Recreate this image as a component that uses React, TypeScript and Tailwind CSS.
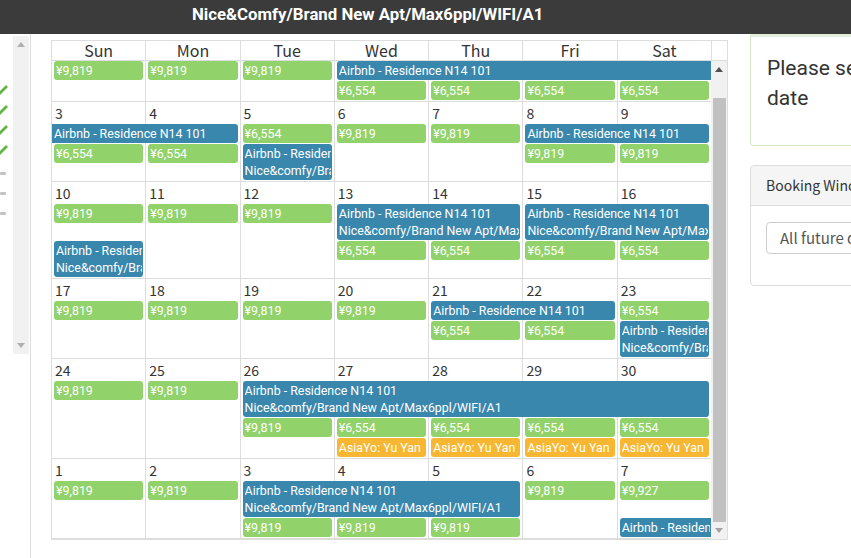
import React from 'react';

const P1 = 'Airbnb - Residence N14 101';
const P2 = 'Nice&comfy/Brand New Apt/Max6ppl/WIFI/A1';

type Kind = 'g' | 'b' | 'o';
type Ev = { c: number; s?: number; l: number; k: Kind; t: string[]; cl?: boolean; cr?: boolean };
type Week = { dates?: string[]; cls: string; ev: Ev[] };

const COL_START = ['col-start-1', 'col-start-2', 'col-start-3', 'col-start-4', 'col-start-5', 'col-start-6', 'col-start-7'];
const COL_SPAN = ['col-span-1', 'col-span-2', 'col-span-3', 'col-span-4', 'col-span-5', 'col-span-6', 'col-span-7'];
const ROW_START = ['row-start-1', 'row-start-2', 'row-start-3', 'row-start-4', 'row-start-5'];
const COLORS: Record<Kind, string> = { g: 'bg-[#91d26a]', b: 'bg-[#3a87ad]', o: 'bg-[#f8b732]' };

const g = (c: number, l: number, t: string): Ev => ({ c, l, k: 'g', t: [t] });
const o = (c: number, l: number): Ev => ({ c, l, k: 'o', t: ['AsiaYo: Yu Yan'] });

const weeks: Week[] = [
  {
    cls: 'h-[41px] grid-rows-[auto_auto_1fr]',
    ev: [
      g(0, 0, '¥9,819'), g(1, 0, '¥9,819'), g(2, 0, '¥9,819'),
      { c: 3, s: 4, l: 0, k: 'b', t: [P1], cr: true },
      g(3, 1, '¥6,554'), g(4, 1, '¥6,554'), g(5, 1, '¥6,554'), g(6, 1, '¥6,554'),
    ],
  },
  {
    dates: ['3', '4', '5', '6', '7', '8', '9'],
    cls: 'h-[80px] grid-rows-[22px_auto_auto_1fr]',
    ev: [
      { c: 0, s: 2, l: 0, k: 'b', t: [P1], cl: true },
      g(2, 0, '¥6,554'), g(3, 0, '¥9,819'), g(4, 0, '¥9,819'),
      { c: 5, s: 2, l: 0, k: 'b', t: [P1] },
      g(0, 1, '¥6,554'), g(1, 1, '¥6,554'),
      { c: 2, l: 1, k: 'b', t: [P1, P2] },
      g(5, 1, '¥9,819'), g(6, 1, '¥9,819'),
    ],
  },
  {
    dates: ['10', '11', '12', '13', '14', '15', '16'],
    cls: 'h-[97px] grid-rows-[22px_auto_auto_1fr]',
    ev: [
      g(0, 0, '¥9,819'), g(1, 0, '¥9,819'), g(2, 0, '¥9,819'),
      { c: 3, s: 2, l: 0, k: 'b', t: [P1, P2] },
      { c: 5, s: 2, l: 0, k: 'b', t: [P1, P2] },
      { c: 0, l: 1, k: 'b', t: [P1, P2] },
      g(3, 1, '¥6,554'), g(4, 1, '¥6,554'), g(5, 1, '¥6,554'), g(6, 1, '¥6,554'),
    ],
  },
  {
    dates: ['17', '18', '19', '20', '21', '22', '23'],
    cls: 'h-[80px] grid-rows-[22px_auto_auto_1fr]',
    ev: [
      g(0, 0, '¥9,819'), g(1, 0, '¥9,819'), g(2, 0, '¥9,819'), g(3, 0, '¥9,819'),
      { c: 4, s: 2, l: 0, k: 'b', t: [P1] },
      g(6, 0, '¥6,554'),
      g(4, 1, '¥6,554'), g(5, 1, '¥6,554'),
      { c: 6, l: 1, k: 'b', t: [P1, P2] },
    ],
  },
  {
    dates: ['24', '25', '26', '27', '28', '29', '30'],
    cls: 'h-[100px] grid-rows-[22px_auto_auto_auto_1fr]',
    ev: [
      g(0, 0, '¥9,819'), g(1, 0, '¥9,819'),
      { c: 2, s: 5, l: 0, k: 'b', t: [P1, P2] },
      g(2, 1, '¥9,819'), g(3, 1, '¥6,554'), g(4, 1, '¥6,554'), g(5, 1, '¥6,554'), g(6, 1, '¥6,554'),
      o(3, 2), o(4, 2), o(5, 2), o(6, 2),
    ],
  },
  {
    dates: ['1', '2', '3', '4', '5', '6', '7'],
    cls: 'h-[80px] grid-rows-[22px_auto_auto_1fr]',
    ev: [
      g(0, 0, '¥9,819'), g(1, 0, '¥9,819'),
      { c: 2, s: 3, l: 0, k: 'b', t: [P1, P2] },
      g(5, 0, '¥9,819'), g(6, 0, '¥9,927'),
      g(2, 1, '¥9,819'), g(3, 1, '¥9,819'), g(4, 1, '¥9,819'),
      { c: 6, l: 1, k: 'b', t: [P1], cr: true },
    ],
  },
];

const DAYS = ['Sun', 'Mon', 'Tue', 'Wed', 'Thu', 'Fri', 'Sat'];

function Up({ color = '#a3a3a3' }: { color?: string }) {
  return (
    <svg width="8" height="5" viewBox="0 0 8 5">
      <polygon points="0,5 4,0 8,5" fill={color} />
    </svg>
  );
}

function Down({ color = '#a3a3a3' }: { color?: string }) {
  return (
    <svg width="8" height="5" viewBox="0 0 8 5">
      <polygon points="0,0 8,0 4,5" fill={color} />
    </svg>
  );
}

function Pill({ e, offset }: { e: Ev; offset: number }) {
  const left = e.cl ? 'ml-[1px]' : 'ml-[3px] rounded-l-[3px]';
  const right = e.cr ? 'mr-0' : 'mr-[2px] rounded-r-[3px]';
  return (
    <div
      className={`${COL_START[e.c]} ${COL_SPAN[(e.s ?? 1) - 1]} ${ROW_START[e.l + offset]} self-start min-w-0 overflow-hidden mb-[1px] pl-[2px] pr-[1px] pt-[1px] pb-[1px] font-['Roboto',sans-serif] text-white text-[12.4px] leading-[17px] ${COLORS[e.k]} ${left} ${right}`}
    >
      {e.t.map((line, i) => (
        <div key={i} className="whitespace-nowrap overflow-hidden">
          {line}
        </div>
      ))}
    </div>
  );
}

function WeekRow({ w }: { w: Week }) {
  const offset = w.dates ? 1 : 0;
  return (
    <div className={`grid grid-cols-7 shrink-0 border-b border-[#ddd] ${w.cls}`}>
      {DAYS.map((d, i) => (
        <div key={d} className={`${COL_START[i]} row-span-full border-l border-[#ddd]`}>
          {w.dates && <div className="pl-[3px] pt-[1px] text-[14px] leading-[20px] text-[#333]">{w.dates[i]}</div>}
        </div>
      ))}
      {w.ev.map((e, i) => (
        <Pill key={i} e={e} offset={offset} />
      ))}
    </div>
  );
}

function Sidebar() {
  return (
    <aside className="w-[31px] shrink-0 border-r border-[#ddd] flex">
      <div className="w-[13px] overflow-hidden flex flex-col pt-[46px]">
        {[0, 1, 2, 3].map((i) => (
          <div key={i} className="h-[20px] flex items-center">
            <svg width="14" height="10" viewBox="0 0 14 10" className="-ml-[6px] shrink-0">
              <polyline points="1,5 5,9 13,1" fill="none" stroke="#62b545" strokeWidth="2.8" />
            </svg>
          </div>
        ))}
        <div className="h-[3px]" />
        {[0, 1, 2].map((i) => (
          <div key={i} className="h-[20px] flex items-center">
            <div className="w-[6px] h-[3px] rounded-[1px] bg-[#c4c4c4]" />
          </div>
        ))}
      </div>
      <div className="w-[16px] h-[318px] mt-[2px] bg-[#f1f1f1] flex flex-col justify-between items-center py-[6px]">
        <Up color="#b0b0b0" />
        <Down color="#b0b0b0" />
      </div>
    </aside>
  );
}

function Calendar() {
  return (
    <div className="w-[677px] shrink-0 ml-[20px] mt-[6px] self-start border-t border-r border-b border-[#ddd] flex flex-col">
      <div className="flex">
        <div className="w-[660px] grid grid-cols-7">
          {DAYS.map((d) => (
            <div key={d} className="h-[20px] border-l border-b border-[#ddd] text-center text-[16px] leading-[18px] text-[#333]">
              {d}
            </div>
          ))}
        </div>
        <div className="w-[16px] h-[20px] border-l border-b border-[#ddd]" />
      </div>
      <div className="flex h-[478px]">
        <div className="w-[660px] flex flex-col overflow-hidden">
          {weeks.map((w, i) => (
            <WeekRow key={i} w={w} />
          ))}
        </div>
        <div className="w-[16px] bg-[#f1f1f1] flex flex-col">
          <div className="h-[17px] flex items-center justify-center">
            <Up color="#505050" />
          </div>
          <div className="h-[20px]" />
          <div className="flex-1 ml-[2px] mr-[1px] bg-[#c1c1c1]" />
          <div className="h-[17px] flex items-center justify-center">
            <Down color="#a3a3a3" />
          </div>
        </div>
      </div>
    </div>
  );
}

function RightPanel() {
  return (
    <div className="ml-[22px] w-[300px] shrink-0 flex flex-col">
      <div className="h-[112px] border border-[#d6e9c6] border-t-[3px] border-t-[#e3f1dc] rounded-b-[4px] pl-[16px] pt-[16px]">
        <p className="font-['Roboto',sans-serif] text-[21px] leading-[30px] whitespace-nowrap text-[#333]">
          Please select a
          <br />
          date
        </p>
      </div>
      <div className="mt-[19px] h-[121px] border border-[#ddd] rounded-[4px] flex flex-col">
        <div className="h-[40px] bg-[#f5f5f5] border-b border-[#ddd] rounded-t-[4px] px-[15px] flex items-center text-[14px] text-[#333]">
          Booking Window
        </div>
        <div className="px-[15px] pt-[16px]">
          <div className="h-[32px] border border-[#ccc] rounded-[4px] pl-[13px] flex items-center text-[15px] text-[#555] whitespace-nowrap">
            All future dates
          </div>
        </div>
      </div>
    </div>
  );
}

export default function App() {
  return (
    <div className="w-[851px] h-[558px] overflow-hidden bg-white font-['Noto_Sans_CJK_JP',sans-serif] text-[#333] flex flex-col">
      <header className="h-[34px] shrink-0 bg-[#3b3b3b] flex items-start pl-[192px]">
        <h1 className="pt-[2px] font-['Roboto',sans-serif] text-white font-bold text-[16.8px] leading-[24px] whitespace-nowrap">
          Nice&amp;Comfy/Brand New Apt/Max6ppl/WIFI/A1
        </h1>
      </header>
      <div className="flex flex-1 min-h-0">
        <Sidebar />
        <Calendar />
        <RightPanel />
      </div>
    </div>
  );
}
